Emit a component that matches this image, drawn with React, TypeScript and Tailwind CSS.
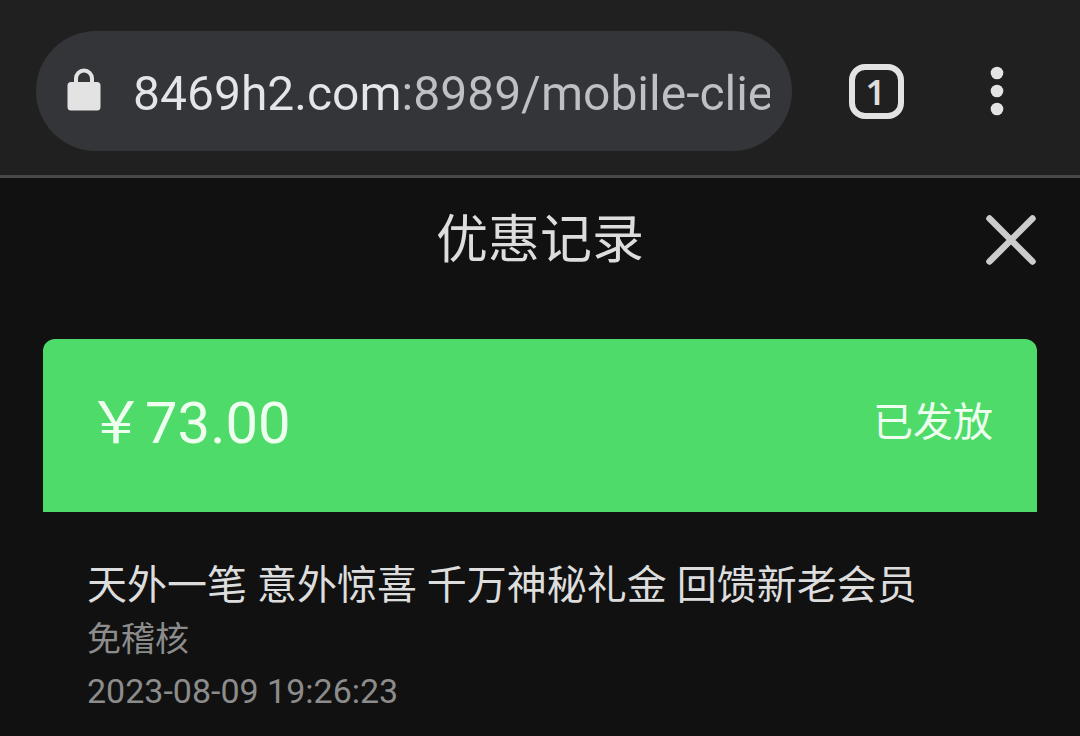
import { useState } from "react";

function LockIcon() {
  return (
    <svg viewBox="0 0 34 46" className="h-[46px] w-[34px] shrink-0" aria-hidden="true">
      <rect x="0.5" y="14" width="33" height="28.5" rx="3.5" fill="#e3e3e3" />
      <path d="M9 16V10.5a8 8 0 0 1 16 0V16" fill="none" stroke="#e3e3e3" strokeWidth="4" />
    </svg>
  );
}

function MenuIcon() {
  return (
    <svg viewBox="0 0 14 50" className="h-[50px] w-[14px]" aria-hidden="true">
      <circle cx="7" cy="7" r="6.3" fill="#e3e3e3" />
      <circle cx="7" cy="25" r="6.3" fill="#e3e3e3" />
      <circle cx="7" cy="43" r="6.3" fill="#e3e3e3" />
    </svg>
  );
}

function CloseIcon() {
  return (
    <svg viewBox="0 0 50 50" className="size-[50px]" aria-hidden="true">
      <path d="M3.5 3.5L46.5 46.5M46.5 3.5L3.5 46.5" stroke="#cccccc" strokeWidth="6.5" strokeLinecap="round" />
    </svg>
  );
}

function BrowserBar() {
  const [url, setUrl] = useState("8469h2.com:8989/mobile-clie");
  return (
    <header className="flex items-center border-b-3 border-[#484848] bg-[#202020] pt-[31px] pr-[76px] pb-6 pl-9">
      <label className="flex h-[120px] min-w-0 flex-1 items-center gap-8 rounded-full bg-[#343538] pr-[22px] pl-[31px]">
        <LockIcon />
        <input
          type="text"
          aria-label="URL"
          value={url}
          onChange={(e) => setUrl(e.target.value)}
          className="h-16 min-w-0 flex-1 bg-linear-to-r from-[#e4e5e9] from-[267px] to-[#bec0c4] to-[267px] bg-clip-text pt-1 text-[48px] leading-[60px] text-transparent caret-white outline-none"
        />
      </label>
      <button
        type="button"
        aria-label="1"
        className="ml-[57px] flex size-[55px] shrink-0 items-center justify-center rounded-[16px] border-6 border-[#e3e3e3] pr-0.5 font-['Noto_Sans'] text-[35px] leading-none font-semibold text-[#dddddd]"
      >
        1
      </button>
      <button type="button" aria-label="Menu" className="ml-[86px] shrink-0">
        <MenuIcon />
      </button>
    </header>
  );
}

export default function App() {
  return (
    <div className="min-h-screen bg-[#111111] font-[Roboto,'Noto_Sans_CJK_SC',sans-serif]">
      <BrowserBar />
      <main>
        <div className="grid grid-cols-[1fr_auto_1fr] items-center px-11 pt-[30px]">
          <h1 className="col-start-2 pt-0.5 text-[52px] leading-[62px] text-[#dddddd]">优惠记录</h1>
          <button type="button" aria-label="Close" className="justify-self-end">
            <CloseIcon />
          </button>
        </div>
        <article className="mx-[43px] mt-[67px]">
          <div className="flex h-[173px] items-center justify-between rounded-t-xl bg-[#4fdb69] px-11 pb-1.5 text-[#eefff0]">
            <span className="text-[58px] leading-[72px]">￥73.00</span>
            <span className="text-[40px] leading-[52px]">已发放</span>
          </div>
          <div className="px-11 pt-[47px] pb-3 text-[34px] leading-[52px] text-[#8c8c8c]">
            <h2 className="text-[40px] leading-[54px] text-[#dddddd]">天外一笔 意外惊喜 千万神秘礼金 回馈新老会员</h2>
            <p>免稽核</p>
            <p>2023-08-09 19:26:23</p>
          </div>
        </article>
      </main>
    </div>
  );
}
